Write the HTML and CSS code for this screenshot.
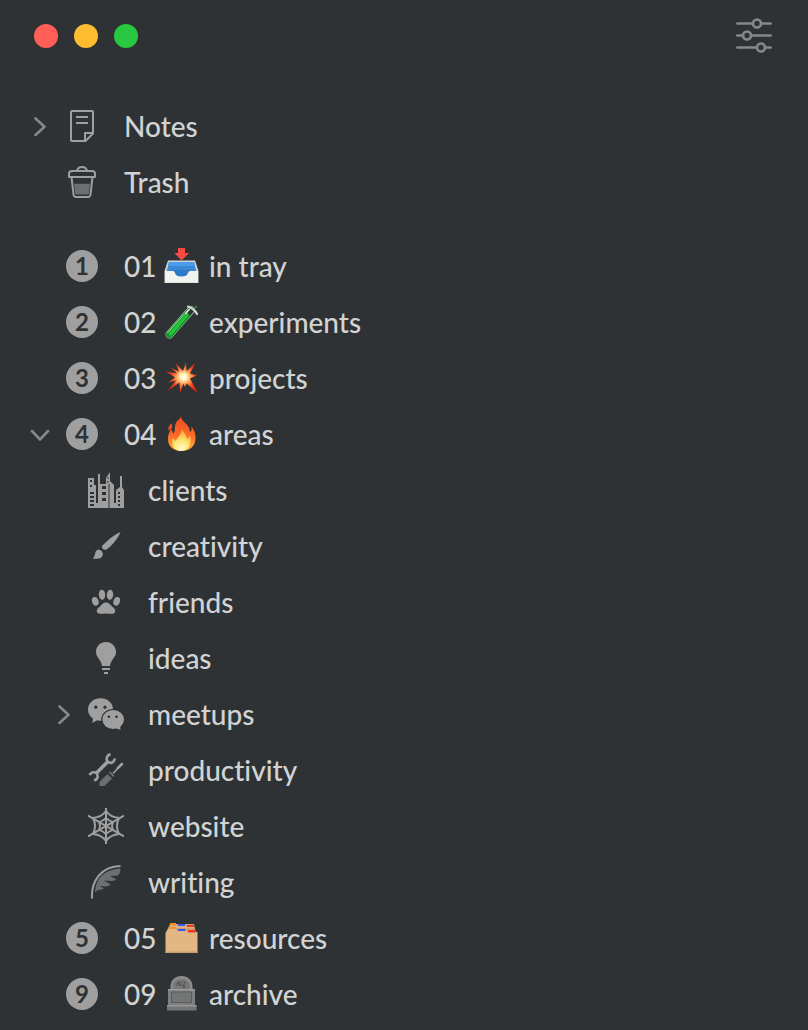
FILE: index.html
```html
<!DOCTYPE html>
<html lang="en">
<head>
  <meta charset="UTF-8" />
  <meta name="viewport" content="width=device-width, initial-scale=1.0"/>
  <title>Notes</title>
  <link rel="stylesheet" href="styles.css">
</head>

<body>

<header class="toolbar">
  <div class="lights">
    <button class="light red" aria-label="Close"></button>
    <button class="light yellow" aria-label="Minimize"></button>
    <button class="light green" aria-label="Zoom"></button>
  </div>
  <button class="settings" aria-label="Settings">
    <svg class="icon" viewBox="0 0 36 36" fill="none" stroke="#868889" stroke-width="2.6" stroke-linecap="round">
      <path d="M1.3 5.5H17M25 5.5H34.7M1.3 17.5H7M15 17.5H34.7M1.3 29.5H21M29 29.5H34.7"/>
      <circle cx="21" cy="5.5" r="4"/>
      <circle cx="11" cy="17.5" r="4"/>
      <circle cx="25" cy="29.5" r="4"/>
    </svg>
  </button>
</header>

<nav class="sidebar">
  <ul class="group">
    <li class="row">
      <button class="toggle" aria-label="Expand Notes">
        <svg class="chevron" viewBox="0 0 20 20"><path d="M5.5 2.5L14.5 10.7L5.5 19"/></svg>
      </button>
      <a href="#notes">
        <svg class="icon" viewBox="0 0 36 36" fill="none" stroke="#9f9f9f" stroke-width="2" stroke-linejoin="round">
          <path d="M8 3H28Q29 3 29 4V25.5L21.5 33H8Q7 33 7 32V4Q7 3 8 3Z"/>
          <path d="M29 25H21V33M12 9H24M12 15H24"/>
        </svg>
        <span>Notes</span>
      </a>
    </li>
    <li class="row">
      <a href="#trash">
        <svg class="icon" viewBox="0 0 36 36" fill="none" stroke="#9f9f9f" stroke-width="2" stroke-linejoin="round">
          <path d="M13 7C13.5 4 15 3 18 3S22.5 4 23 7"/>
          <path d="M8 7H28Q31 7 31 10V13H5V10Q5 7 8 7Z"/>
          <path d="M7.5 13L9.5 30.5Q9.8 33 12.3 33H23.7Q26.2 33 26.5 30.5L28.5 13"/>
          <path d="M10 19.7H26L25 29Q24.8 30.5 23.5 30.5H12.5Q11.2 30.5 11 29Z" fill="#6c6e70" stroke="none"/>
        </svg>
        <span>Trash</span>
      </a>
    </li>
  </ul>

  <ul class="group">
    <li class="row">
      <a href="#in-tray">
        <span class="badge">1</span>
        <span class="number">01</span>
        <svg class="emoji" viewBox="0 0 36 36">
          <path d="M5 12.5H32L35.5 23V35H1.5V23Z" fill="#d4d5d3"/>
          <path d="M6 14H31L33.5 24H3.5Z" fill="#3a87d6"/>
          <path d="M6 14H31L32 18H5Z" fill="#4c9be8"/>
          <path d="M10 22H27V30H10Z" fill="#2c79c9"/>
          <path d="M2 23H10Q11.5 23 12 25Q13 28.5 18.5 28.5T25 25Q25.5 23 27 23H35V34.5H2Z" fill="#f2f2ef"/>
          <path d="M15 0H22V5H26L18.5 12.5L11.5 5H15Z" fill="#f64a43"/>
        </svg>
        <span>in tray</span>
      </a>
    </li>
    <li class="row">
      <a href="#experiments">
        <span class="badge">2</span>
        <span class="number">02</span>
        <svg class="emoji" viewBox="0 0 36 36" fill="none" stroke-linecap="round">
          <path d="M28 6L6.5 30.5" stroke="#8eb792" stroke-width="8"/>
          <path d="M28 6L6.5 30.5" stroke="#273a2b" stroke-width="6.4"/>
          <path d="M23 12L6.5 30.5" stroke="#14982a" stroke-width="6.4"/>
          <path d="M24 11L7.5 30" stroke="#25c53a" stroke-width="3"/>
          <path d="M21 10.5L4.8 28.6" stroke="#8ee892" stroke-width="1"/>
          <path d="M25 2.5C28 3 33 7 34 10" stroke="#d8dcd8" stroke-width="2.2"/>
          <path d="M26.5 5L22.500 9.5" stroke="#e9efe9" stroke-width="1.6"/>
          <circle cx="33" cy="3" r="1.2" fill="#2f8a3c"/>
        </svg>
        <span>experiments</span>
      </a>
    </li>
    <li class="row">
      <a href="#projects">
        <span class="badge">3</span>
        <span class="number">03</span>
        <svg class="emoji" viewBox="0 0 36 36">
          <defs>
            <radialGradient id="boom" gradientUnits="userSpaceOnUse" cx="20.5" cy="17" r="17">
              <stop offset="0" stop-color="#fff"/>
              <stop offset="0.2" stop-color="#fff3b5"/>
              <stop offset="0.4" stop-color="#ffa55c"/>
              <stop offset="0.7" stop-color="#f6421b"/>
              <stop offset="1" stop-color="#dc2410"/>
            </radialGradient>
          </defs>
          <path d="M23 2L23.5 11L32.5 3L27 13.5L34 15.5L27 18.5L35 33.5L23.5 23.5L22 27L20.5 23.5L17 33L16.5 22.5L4.5 31L13 20.5L5 22.500L12 17.5L3 11.5L14.5 13.5L7 7.5L16 11.5L12.5 3L20 11Z" fill="url(#boom)"/>
        </svg>
        <span>projects</span>
      </a>
    </li>
    <li class="row">
      <button class="toggle" aria-label="Collapse areas" aria-expanded="true">
        <svg class="chevron" viewBox="0 0 20 20"><path d="M2 7L10 15.5L18 7"/></svg>
      </button>
      <a href="#areas">
        <span class="badge">4</span>
        <span class="number">04</span>
        <svg class="emoji" viewBox="0 0 36 36">
          <defs>
            <linearGradient id="fire" x1="0" y1="0" x2="0" y2="1">
              <stop offset="0" stop-color="#ee4a22"/>
              <stop offset="0.55" stop-color="#fb6a27"/>
              <stop offset="1" stop-color="#ffb43a"/>
            </linearGradient>
            <radialGradient id="flame" cx="0.5" cy="0.9" r="0.9">
              <stop offset="0" stop-color="#fffbd2"/>
              <stop offset="0.45" stop-color="#ffe36b"/>
              <stop offset="1" stop-color="#ff8c33"/>
            </radialGradient>
          </defs>
          <path d="M18 0C18 6 27 8 27 16C29 15 29 13 28 10.5C31 13 33 18 32.5 23C32 31 26 35 18.5 35S5 31 5 23C5 18 7 16 7.5 13C9 14 10 16 10 18C13 15 11 12 12.5 8C13.5 4 17 4 18 0Z" fill="url(#fire)"/>
          <path d="M8 7.500Q10 9 9 12.5Q6 13 5.5 15Q4.5 11 8 7.500Z" fill="#ed4b20"/>
          <path d="M19 12C20 17 24 18 24 23C26 22 26 21 27 19C29 26 27 35 18.5 35S8 28 9.5 22C11 23 12 24 12.5 25C15 21 19 18 19 12Z" fill="url(#flame)"/>
        </svg>
        <span>areas</span>
      </a>
    </li>
    <li>
      <ul class="group children">
        <li class="row">
          <a href="#clients">
            <svg class="icon" viewBox="0 0 36 36" fill="#9f9f9f">
              <path fill-rule="evenodd" d="M0 6H6V13H8V31H10V2H12V12H18V6L22 0V9L26 13V31H28V18L32 15V4H34V15L36 18V36H0ZM2 8V10H4V8ZM2 13V15H4V13ZM2 20V22H6V20ZM2 24V26H6V24ZM2 28V30H6V28ZM2 32V34H6V32ZM14 14V17H18V14ZM14 20V23H18V20ZM14 26V29H18V26ZM30 20V22H32V20ZM30 24V26H32V24ZM30 28V30H32V28ZM30 32V34H32V32Z"/>
              <path d="M20 12H22V36H20ZM19 5H21V7H19ZM19 9H21V11H19Z" fill="#696b6c"/>
            </svg>
            <span>clients</span>
          </a>
        </li>
        <li class="row">
          <a href="#creativity">
            <svg class="icon" viewBox="0 0 36 36" fill="#9f9f9f">
              <path d="M32.5 4C31 9 24 18 18.5 21.5Q16 22.5 14.5 20.5T15.5 16.5C20 12 27 6 32.5 4Z"/>
              <path d="M8 23C10 20.5 14.5 22 14.8 25.5C15 30.5 10 31.5 4.5 30.5C7.5 28.5 6.5 25.5 8 23Z"/>
            </svg>
            <span>creativity</span>
          </a>
        </li>
        <li class="row">
          <a href="#friends">
            <svg class="icon" viewBox="0 0 36 36" fill="#9f9f9f">
              <ellipse cx="7.3" cy="17.3" rx="3.2" ry="4.4" transform="rotate(-18 7.3 17.3)"/>
              <ellipse cx="14" cy="10.8" rx="3.2" ry="5" transform="rotate(-5 14 10.8)"/>
              <ellipse cx="22" cy="10.8" rx="3.2" ry="5" transform="rotate(5 22 10.8)"/>
              <ellipse cx="28.7" cy="17.3" rx="3.2" ry="4.4" transform="rotate(18 28.7 17.3)"/>
              <path d="M18 18.5C21 18.5 22 20.5 24 22.5C26 24 27.5 25 27.2 27.5C26.5 31 22 29.5 18 29.5S9.5 31 8.8 27.5C8.5 25 10 24 12 22.5C14 20.5 15 18.5 18 18.5Z"/>
            </svg>
            <span>friends</span>
          </a>
        </li>
        <li class="row">
          <a href="#ideas">
            <svg class="icon" viewBox="0 0 36 36" fill="#9f9f9f">
              <path d="M18 2C24 2 28 6.500 28 12C28 17.5 23 19 22 26H14C13 19 8 17.5 8 12C8 6.500 12 2 18 2Z"/>
              <path d="M14 28H22V30H14ZM16 32H20V34H16Z"/>
            </svg>
            <span>ideas</span>
          </a>
        </li>
        <li class="row">
          <button class="toggle" aria-label="Expand meetups">
            <svg class="chevron" viewBox="0 0 20 20"><path d="M5.5 2.5L14.5 10.7L5.5 19"/></svg>
          </button>
          <a href="#meetups">
            <svg class="icon" viewBox="0 0 36 36" fill="#9f9f9f">
              <ellipse cx="12.5" cy="13.5" rx="12.5" ry="11.2"/>
              <path d="M5 21L4.5 27L11 23Z"/>
              <ellipse cx="25.2" cy="23.5" rx="12" ry="10.6" fill="#2e3235"/>
              <ellipse cx="25.2" cy="23.5" rx="10.8" ry="9.4"/>
              <path d="M27 32L32.5 33.8L32 29Z"/>
              <g fill="#2e3235">
                <circle cx="7.8" cy="11.2" r="1.6"/>
                <circle cx="17" cy="11.2" r="1.6"/>
                <circle cx="20.8" cy="20.8" r="1.3"/>
                <circle cx="28.5" cy="20.8" r="1.3"/>
              </g>
            </svg>
            <span>meetups</span>
          </a>
        </li>
        <li class="row">
          <a href="#productivity">
            <svg class="icon" viewBox="0 0 36 36" fill="none" stroke="#9f9f9f">
              <path d="M8 21.5L20 9.5" stroke-width="3.6"/>
              <path d="M22.5 2.2C18.5 3.2 17.5 7.500 20 9.8S26 10.500 27 6.5" stroke-width="2.6"/>
              <path d="M1.5 23C3.500 19.5 8 19.5 9.2 22.5S9 27.5 6 28.5" stroke-width="2.6"/>
              <path d="M25 21.5L31 15" stroke-width="1.6"/>
              <path d="M29.8 16.2L34 12" stroke-width="2.6" stroke-linecap="round"/>
              <path d="M21.500 20L26 24.5" stroke="#77797a" stroke-width="1.6"/>
              <path d="M19.5 22L24 26.500L16.5 34H11.5V30Z" fill="#6c6e70" stroke="none"/>
            </svg>
            <span>productivity</span>
          </a>
        </li>
        <li class="row">
          <a href="#website">
            <svg class="icon" viewBox="0 0 36 36" fill="none" stroke="#9f9f9f" stroke-width="2">
              <path d="M18 -1V37M0 7.6L36 28.4M0 28.4L36 7.6"/>
              <path d="M18 3Q22 9 31 10Q27 18 31 26Q22 27 18 33Q14 27 5 26Q9 18 5 10Q14 9 18 3Z"/>
              <path d="M18 10Q21 13 25 14Q23 18 25 22Q21 23 18 26Q15 23 11 22Q13 18 11 14Q15 13 18 10Z" stroke-width="1.8"/>
            </svg>
            <span>website</span>
          </a>
        </li>
        <li class="row">
          <a href="#writing">
            <svg class="icon" viewBox="0 0 36 36">
              <path d="M4 34.5C3 17 13 2.5 32.5 2" fill="none" stroke="#9f9f9f" stroke-width="2"/>
              <path d="M7 28.5C7.500 14 16 5.5 32.5 4.5C32.5 8 31.5 10 30 11.5L22 12L28.500 15.500Q26 17 23 17L16 16.500L23 20.5Q20 22.500 17 22.5L11.500 22L16 24.5Q13 26 10 26Z" fill="#6c6e70"/>
            </svg>
            <span>writing</span>
          </a>
        </li>
      </ul>
    </li>
    <li class="row">
      <a href="#resources">
        <span class="badge">5</span>
        <span class="number">05</span>
        <svg class="emoji" viewBox="0 0 36 36">
          <path d="M7 4H31L33 13H3Z" fill="#c99f70"/>
          <path d="M7 3H13V5H15V4H22V6H24V5H31V8H7Z" fill="#ddb27f"/>
          <path d="M2.5 13L5.5 8H13V10H24V12H34.5V33H2.5Z" fill="#e2b783"/>
          <path d="M2.5 31.5H34.5V33H2.5Z" fill="#c79e6e"/>
          <path d="M7 3H13V5.5H7ZM5.7 7H13V9H5.7Z" fill="#f6922e"/>
          <path d="M15 4H22V6H15ZM15 9H22.5V11H15Z" fill="#3857e8"/>
          <path d="M24 5H31V7H24ZM25 10H32.5V12.5H25Z" fill="#ef3628"/>
        </svg>
        <span>resources</span>
      </a>
    </li>
    <li class="row">
      <a href="#archive">
        <span class="badge">9</span>
        <span class="number">09</span>
        <svg class="emoji" viewBox="0 0 36 36">
          <path d="M7.5 13V11C7.5 4 12 0 18.5 0S29.5 4 29.5 11V13Z" fill="#8b8c8b"/>
          <path d="M10 13V11C10 6 13 3 18.5 3S27 6 27 11V13Z" fill="#777978"/>
          <path d="M5 13H32V29H5Z" fill="#7d7f7e"/>
          <path d="M5 13H32V14.5H5Z" fill="#9a9b9a"/>
          <path d="M8.5 16H28.5V26.5H8.5Z" fill="#747675" stroke="#5a5c5b"/>
          <path d="M4 29H33.5V34.5H4Z" fill="#747675"/>
          <path d="M4 29H33.5V30.5H4Z" fill="#969796"/>
          <path d="M14 10Q14 5 17 6T16 10M20 5Q24 6 20 9Q24 10 20 12M15 7L22 12" fill="none" stroke="#4d4f4e"/>
        </svg>
        <span>archive</span>
      </a>
    </li>
  </ul>
</nav>

</body>
</html>
```
FILE: styles.css
```css
* {
  box-sizing: border-box;
}

body {
  margin: 0;
  min-height: 100vh;
  background: #2e3235;
  color: #d2d3d3;
  font-family: Lato, sans-serif;
  font-size: 28px;
  font-weight: 500;
  font-variant-ligatures: none;
  line-height: 36px;
}

button {
  padding: 0;
  border: none;
  background: none;
  cursor: pointer;
}

.toolbar {
  display: flex;
  align-items: center;
  justify-content: space-between;
  height: 72px;
  padding: 0 36px 0 34px;
}

.lights {
  display: flex;
  gap: 16px;
}

.light {
  width: 24px;
  height: 24px;
  border-radius: 50%;
}

.red {
  background: #ff5f57;
}

.yellow {
  background: #febc2e;
}

.green {
  background: #28c840;
}

.settings {
  display: flex;
}

.sidebar {
  display: flex;
  flex-direction: column;
  gap: 28px;
  padding: 26px 26px 0;
}

.group {
  margin: 0;
  padding: 0;
  list-style: none;
}

.children {
  padding-left: 24px;
}

.row {
  display: grid;
  grid-template-columns: 28px 1fr;
  align-items: center;
  height: 56px;
}

.row a {
  grid-column: 2;
  display: flex;
  align-items: center;
  gap: 8px;
  padding-left: 10px;
  color: inherit;
  text-decoration: none;
}

.toggle {
  display: flex;
  justify-content: center;
}

.chevron {
  width: 20px;
  height: 20px;
  fill: none;
  stroke: #868889;
  stroke-width: 2.6;
  stroke-linecap: round;
  stroke-linejoin: round;
}

.icon,
.emoji {
  flex: none;
  width: 36px;
  height: 36px;
}

.row .icon {
  margin-right: 16px;
}

.number {
  width: 31px;
}

.emoji {
  margin-right: 2px;
}

.badge {
  width: 32px;
  height: 32px;
  margin: 0 18px 0 2px;
  border-radius: 50%;
  background: #9f9f9f;
  color: #2e3235;
  font-size: 24px;
  font-weight: 700;
  line-height: 32px;
  text-align: center;
}
```
